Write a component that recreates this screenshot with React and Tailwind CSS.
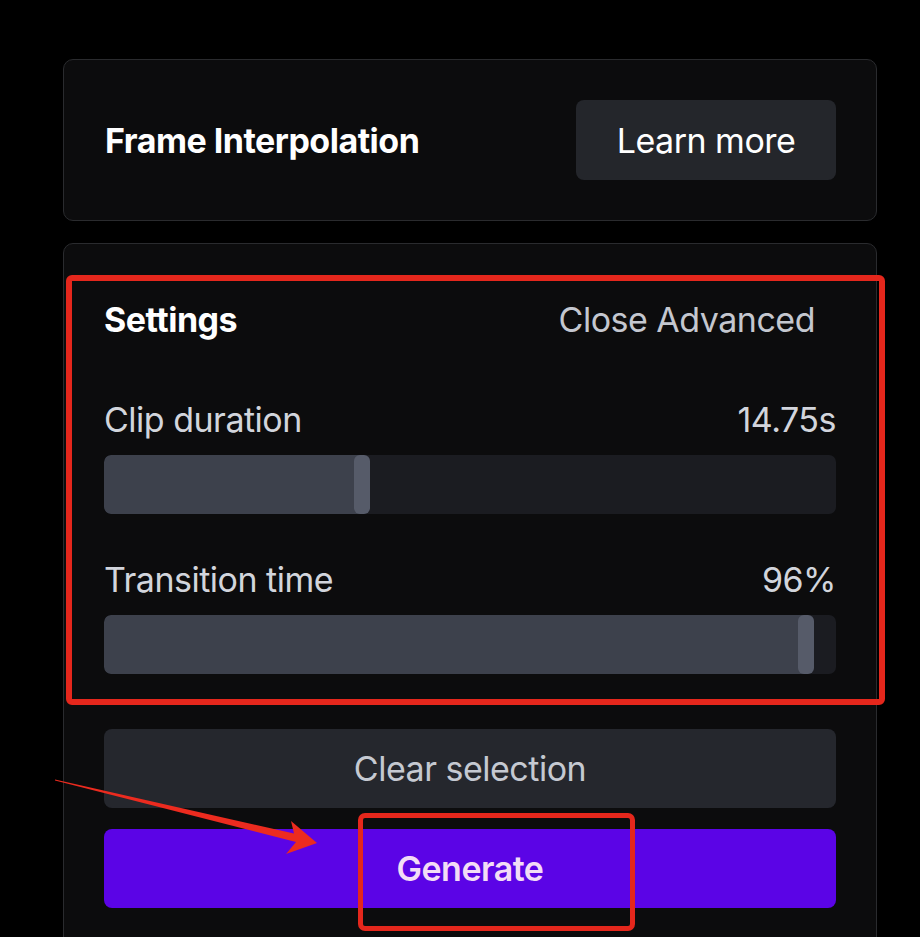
import React from 'react';

const Slider = ({ fill, thumb }) => {
  return (
    <div className="relative h-[59px] w-full rounded-[7px] bg-[#1b1c21] overflow-hidden">
      {/* filled part */}
      <div className={`absolute left-0 top-0 h-full bg-[#3d414c] rounded-l-[7px] ${fill}`} />
      {/* thumb */}
      <div className={`absolute top-0 h-full w-[16px] rounded-[6px] bg-[#565b69] ${thumb}`} />
    </div>
  );
};

const App = () => {
  return (
    <div
      className="relative min-h-[937px] w-[920px] overflow-hidden bg-black pt-[59px] pl-[63px] pr-[43px]"
      style={{ fontFamily: 'Inter, "Noto Sans", sans-serif' }}
    >
      {/* Card Frame Interpolation */}
      <div className="flex h-[162px] items-center justify-between rounded-[10px] border border-[#2a2b2e] bg-[#0c0c0d] pl-[41px] pr-[40px]">
        <h2 className="text-[34px] font-bold tracking-[-0.5px] text-white">Frame Interpolation</h2>
        <button className="h-[80px] w-[260px] rounded-[8px] bg-[#24262b] text-[34px] tracking-[-0.5px] text-white">
          Learn more
        </button>
      </div>

      {/* Card Settings */}
      <div className="mt-[22px] h-[720px] rounded-t-[10px] border border-[#2a2b2e] bg-[#0c0c0d] px-[40px] pt-[55px]">
        <div className="flex h-[40px] items-center justify-between pr-[21px]">
          <span className="text-[34px] font-bold tracking-[-0.5px] text-white">Settings</span>
          <span className="text-[34px] tracking-[-0.5px] text-[#c4c7cf]">Close Advanced</span>
        </div>

        <div className="mt-[60px] flex h-[40px] items-center justify-between">
          <span className="text-[34px] tracking-[-0.5px] text-[#d2d5dc]">Clip duration</span>
          <span className="text-[34px] tracking-[-0.5px] text-[#d2d5dc]">14.75s</span>
        </div>
        <div className="mt-[16px]">
          <Slider fill="w-[258px]" thumb="left-[250px]" />
        </div>

        <div className="mt-[45px] flex h-[40px] items-center justify-between">
          <span className="text-[34px] tracking-[-0.5px] text-[#d2d5dc]">Transition time</span>
          <span className="text-[34px] tracking-[-0.5px] text-[#d2d5dc]">96%</span>
        </div>
        <div className="mt-[16px]">
          <Slider fill="w-[702px]" thumb="left-[694px]" />
        </div>

        <button className="mt-[55px] h-[79px] w-full rounded-[8px] bg-[#25272d] text-[34px] tracking-[-0.5px] text-[#c5c9d1]">
          Clear selection
        </button>
        <button className="mt-[21px] h-[79px] w-full rounded-[8px] bg-[#5b04e6] text-[34px] font-semibold tracking-[-0.5px] text-[#f3dcf6]">
          Generate
        </button>
      </div>

      {/* annotations */}
      <div className="pointer-events-none absolute left-[66px] top-[275px] h-[430px] w-[819px] rounded-[6px] border-[6px] border-[#e5271c]" />
      <div className="pointer-events-none absolute left-[358px] top-[813px] h-[118px] w-[277px] rounded-[7px] border-[5px] border-[#e5271c]" />
      <svg className="pointer-events-none absolute left-0 top-0" width="920" height="937">
        <polygon
          points="55,779.5 294,833.5 291,821 317,843 286,854 296,842 55,780.5"
          fill="#ec2b1f"
        />
      </svg>
    </div>
  );
};

export default App;
